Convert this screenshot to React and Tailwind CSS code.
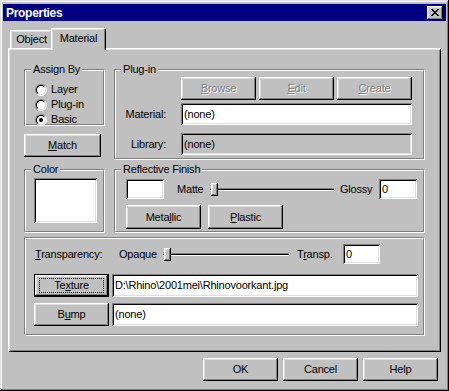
import { useState } from "react"

const raised =
  "bg-[#c0c0c0] shadow-[inset_-1px_-1px_0_#000,inset_1px_1px_0_#fff,inset_-2px_-2px_0_#808080,inset_2px_2px_0_#dfdfdf]"
const sunken =
  "shadow-[inset_1px_1px_0_#808080,inset_-1px_-1px_0_#fff,inset_2px_2px_0_#000,inset_-2px_-2px_0_#dfdfdf]"

function Btn({ children, className = "", disabled }) {
  return (
    <button
      className={`flex items-center justify-center ${raised} ${
        disabled ? "text-[#808080] [text-shadow:1px_1px_0_#fff]" : "text-black"
      } ${className}`}
    >
      {children}
    </button>
  )
}

function Group({ label, className = "", children }) {
  return (
    <div className={`relative border border-t-[#808080] border-l-[#808080] border-b-white border-r-white ${className}`}>
      <div className="h-full border border-t-white border-l-white border-b-[#808080] border-r-[#808080]">
        {children}
      </div>
      {label && (
        <span className="absolute -top-[7px] left-[6px] bg-[#c0c0c0] px-[2px] leading-[13px]">{label}</span>
      )}
    </div>
  )
}

function Field({ children, className = "", gray }) {
  return (
    <div className={`flex items-center pl-[3px] ${gray ? "bg-[#c0c0c0]" : "bg-white"} ${sunken} ${className}`}>
      {children}
    </div>
  )
}

function Radio({ label, checked }) {
  return (
    <div className="flex items-center gap-[4px] h-[15px]">
      <div className="w-[12px] h-[12px] rounded-full border border-t-[#808080] border-l-[#808080] border-b-white border-r-white">
        <div className="w-full h-full rounded-full border border-t-black border-l-black border-b-[#dfdfdf] border-r-[#dfdfdf] bg-white flex items-center justify-center">
          {checked && <div className="w-[4px] h-[4px] rounded-full bg-black" />}
        </div>
      </div>
      <span>{label}</span>
    </div>
  )
}

function Slider({ className = "" }) {
  return (
    <div className={`relative h-[20px] flex items-center ${className}`}>
      <div className="w-full h-[3px] bg-black border-t border-t-[#808080] border-b border-b-white" />
      <div className={`absolute left-[1px] top-[4px] w-[7px] h-[13px] ${raised}`} />
    </div>
  )
}

function Tab({ label, active }) {
  return (
    <div
      className={`flex items-center justify-center bg-[#c0c0c0] rounded-t-[2px] border-t border-l border-r border-t-white border-l-white border-r-black shadow-[inset_-1px_0_0_#808080,inset_1px_1px_0_#dfdfdf] ${
        active ? "relative z-10 w-[55px] h-[22px] -ml-[2px] -mb-[2px] pb-[2px]" : "w-[43px] h-[18px]"
      }`}
    >
      {label}
    </div>
  )
}

function CloseButton() {
  return (
    <button className={`w-[16px] h-[14px] flex items-center justify-center ${raised}`}>
      <svg width="8" height="7" viewBox="0 0 8 7" shapeRendering="crispEdges">
        <path d="M0 0h2v1h1v1h2v-1h1v-1h2v1h-1v1h-1v1h-1v1h1v1h1v1h1v1h-2v-1h-1v-1h-2v1h-1v1h-2v-1h1v-1h1v-1h1v-1h-1v-1h-1v-1h-1z" fill="#000" />
      </svg>
    </button>
  )
}

export default function App() {
  const [tab] = useState("Material")
  return (
    <div className="w-[449px] h-[391px] bg-[#c0c0c0] shadow-[inset_-1px_-1px_0_#000,inset_1px_1px_0_#dfdfdf,inset_-2px_-2px_0_#808080,inset_2px_2px_0_#fff] flex flex-col pt-[4px] px-[3px] font-['Liberation_Sans',Arial,sans-serif] text-[11px] tracking-[-0.2px] text-black select-none">
      {/* title bar */}
      <div className="h-[17px] bg-[#000080] flex items-center justify-between pl-[3px] pr-[3px]">
        <span className="text-white font-bold text-[12px] tracking-[-0.3px]">Properties</span>
        <CloseButton />
      </div>

      <div className="ml-[5px] mt-[7px] w-[433px]">
        <div className="flex items-end h-[20px] pl-[2px]">
          <Tab label="Object" active={tab === "Object"} />
          <Tab label="Material" active={tab === "Material"} />
        </div>

        <div className="h-[304px] px-[16px] pt-[21px] shadow-[inset_1px_1px_0_#fff,inset_-1px_-1px_0_#000,inset_2px_2px_0_#dfdfdf,inset_-2px_-2px_0_#808080]">
          <div className="flex gap-[9px]">
            {/* left column */}
            <div className="w-[81px] flex flex-col">
              <Group label="Assign By" className="h-[57px]">
                <div className="pt-[11px] pl-[9px]">
                  <Radio label="Layer" />
                  <Radio label="Plug-in" />
                  <Radio label="Basic" checked />
                </div>
              </Group>
              <Btn className="mt-[8px] w-[77px] h-[23px]">
                <span><u>M</u>atch</span>
              </Btn>
              <Group label="Color" className="mt-[12px] h-[64px]">
                <div className={`ml-[8px] mt-[7px] w-[63px] h-[45px] bg-white ${sunken}`} />
              </Group>
            </div>

            {/* right column */}
            <div className="w-[311px] flex flex-col">
              <Group label="Plug-in" className="h-[91px]">
                <div className="flex gap-[3px] mt-[6px] pl-[65px]">
                  <Btn disabled className="w-[75px] h-[23px]"><span><u>B</u>rowse</span></Btn>
                  <Btn disabled className="w-[75px] h-[23px]"><span><u>E</u>dit</span></Btn>
                  <Btn disabled className="w-[75px] h-[23px]"><span><u>C</u>reate</span></Btn>
                </div>
                <div className="flex items-center mt-[3px]">
                  <span className="w-[65px] text-right pr-[15px]">Material:</span>
                  <Field className="w-[231px] h-[22px]">(none)</Field>
                </div>
                <div className="flex items-center mt-[8px]">
                  <span className="w-[65px] text-right pr-[15px]">Library:</span>
                  <Field gray className="w-[231px] h-[22px]">(none)</Field>
                </div>
              </Group>

              <Group label="Reflective Finish" className="mt-[9px] h-[64px]">
                <div className="flex items-center h-[20px] mt-[8px] pl-[10px]">
                  <div className={`w-[38px] h-[20px] bg-white ${sunken}`} />
                  <span className="ml-[13px] w-[33px]">Matte</span>
                  <Slider className="w-[124px]" />
                  <span className="ml-[6px] w-[39px]">Glossy</span>
                  <Field className="w-[38px] h-[20px]">0</Field>
                </div>
                <div className="flex gap-[7px] mt-[6px] pl-[10px]">
                  <Btn className="w-[75px] h-[24px]"><span>Meta<u>l</u>lic</span></Btn>
                  <Btn className="w-[75px] h-[24px]"><span><u>P</u>lastic</span></Btn>
                </div>
              </Group>
            </div>
          </div>

          {/* bottom group */}
          <Group className="mt-[4px] w-[401px] h-[99px]">
            <div className="flex items-center h-[20px] mt-[5px] pl-[9px]">
              <span className="w-[84px]"><u>T</u>ransparency:</span>
              <span className="w-[44px]">Opaque</span>
              <Slider className="w-[126px]" />
              <span className="ml-[8px] w-[46px]">T<u>r</u>ansp.</span>
              <Field className="w-[37px] h-[20px]">0</Field>
            </div>
            <div className="flex gap-[3px] mt-[10px] pl-[8px]">
              <button className="w-[75px] h-[23px] flex items-center justify-center bg-[#c0c0c0] shadow-[inset_0_0_0_1px_#000,inset_-2px_-2px_0_#000,inset_2px_2px_0_#fff,inset_-3px_-3px_0_#808080,inset_3px_3px_0_#dfdfdf]">
                <span className="w-[65px] h-[15px] flex items-center justify-center border border-dotted border-black">
                  Te<u>x</u>ture
                </span>
              </button>
              <Field className="w-[306px] h-[23px]">D:\Rhino\2001mei\Rhinovoorkant.jpg</Field>
            </div>
            <div className="flex gap-[3px] mt-[6px] pl-[8px]">
              <Btn className="w-[75px] h-[23px]"><span>B<u>u</u>mp</span></Btn>
              <Field className="w-[306px] h-[23px]">(none)</Field>
            </div>
          </Group>
        </div>
      </div>

      {/* dialog buttons */}
      <div className="mt-[6px] flex justify-end gap-[5px] pr-[8px]">
        <Btn className="w-[75px] h-[23px]">OK</Btn>
        <Btn className="w-[75px] h-[23px]">Cancel</Btn>
        <Btn className="w-[75px] h-[23px]">Help</Btn>
      </div>
    </div>
  )
}
